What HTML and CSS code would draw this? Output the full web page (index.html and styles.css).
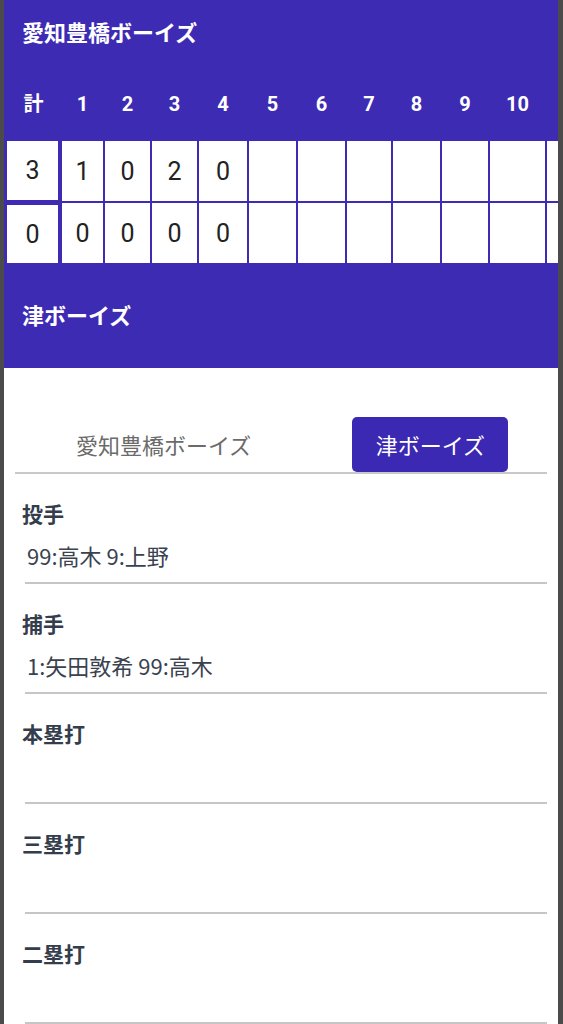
FILE: index.html
```html
<!DOCTYPE html>
<html lang="ja">
<head>
    <meta charset="UTF-8">
    <meta name="viewport" content="width=device-width, initial-scale=1.0">
    <title>スコア入力</title>
    <link rel="stylesheet" href="styles.css">
</head>
<body>
    <div class="app">
        <header class="board">
            <div class="team-name">愛知豊橋ボーイズ</div>
            <div class="score-grid">
                <div class="inning">計</div>
                <div class="inning">1</div>
                <div class="inning">2</div>
                <div class="inning">3</div>
                <div class="inning">4</div>
                <div class="inning">5</div>
                <div class="inning">6</div>
                <div class="inning">7</div>
                <div class="inning">8</div>
                <div class="inning">9</div>
                <div class="inning">10</div>
                <div class="inning"></div>

                <div class="cell total total-top">3</div>
                <div class="cell">1</div>
                <div class="cell">0</div>
                <div class="cell">2</div>
                <div class="cell">0</div>
                <div class="cell"></div>
                <div class="cell"></div>
                <div class="cell"></div>
                <div class="cell"></div>
                <div class="cell"></div>
                <div class="cell"></div>
                <div class="cell"></div>

                <div class="cell total total-bottom">0</div>
                <div class="cell">0</div>
                <div class="cell">0</div>
                <div class="cell">0</div>
                <div class="cell">0</div>
                <div class="cell"></div>
                <div class="cell"></div>
                <div class="cell"></div>
                <div class="cell"></div>
                <div class="cell"></div>
                <div class="cell"></div>
                <div class="cell"></div>
            </div>
            <div class="team-name team-away">津ボーイズ</div>
        </header>

        <div class="tabs">
            <button class="tab">愛知豊橋ボーイズ</button>
            <button class="tab tab-active">津ボーイズ</button>
        </div>

        <div class="fields">
            <div class="field">
                <div class="field-label">投手</div>
                <div class="field-value">99:高木 9:上野</div>
            </div>
            <div class="field">
                <div class="field-label">捕手</div>
                <div class="field-value">1:矢田敦希 99:高木</div>
            </div>
            <div class="field">
                <div class="field-label">本塁打</div>
                <div class="field-value"></div>
            </div>
            <div class="field">
                <div class="field-label">三塁打</div>
                <div class="field-value"></div>
            </div>
            <div class="field">
                <div class="field-label">二塁打</div>
                <div class="field-value"></div>
            </div>
        </div>
    </div>
</body>
</html>
```

FILE: styles.css
```css
body {
    margin: 0;
    padding: 0 5px 0 4px;
    background-color: #4b4b4b; /* gris del marco */
    font-family: "Noto Sans CJK JP", "Noto Sans", sans-serif;
}
.app {
    background-color: #ffffff;
    min-height: 1024px;
    overflow: hidden;
}

/* marcador */
.board {
    background-color: #3d2bb4;
    overflow: hidden;
}
.team-name {
    padding: 17px 18px 3px;
    color: #ffffff;
    font-size: 22px;
    font-weight: 700;
    line-height: 28px;
}
.team-away {
    padding: 37px 18px 40px;
}
.score-grid {
    display: grid;
    grid-template-columns: 53px 41px 45px 45px 48px 47px 47px 44px 47px 46px 55px 55px;
    grid-template-rows: 91px 60px 60px;
    gap: 2px;
    padding-left: 3px;
    width: max-content;
}
.inning {
    padding-top: 46px;
    color: #ffffff;
    font-family: Roboto, "Noto Sans CJK JP", sans-serif;
    font-size: 20px;
    font-weight: 700;
    line-height: 20px;
    text-align: center;
    box-sizing: border-box;
}
.cell {
    display: flex;
    align-items: center;
    justify-content: center;
    background-color: #ffffff;
    color: #222222;
    font-family: Roboto, sans-serif;
    font-size: 25px;
}
.total {
    margin-right: 2px;
}
.total-top {
    margin-bottom: 1px;
}
.total-bottom {
    margin-top: 2px;
}

/* pestañas */
.tabs {
    display: flex;
    align-items: center;
    margin: 49px 11px 0;
    border-bottom: 2px solid #c8c8c8;
}
.tab {
    margin-left: 61px;
    padding: 0;
    border: none;
    background: none;
    color: #6b6b6b;
    font-family: "Noto Sans CJK JP", sans-serif;
    font-size: 22px;
    line-height: 53px;
}
.tab-active {
    width: 156px;
    height: 55px;
    margin-left: 101px;
    border-radius: 5px;
    background-color: #3b29b3;
    color: #ffffff;
}

/* campos */
.field {
    padding: 25px 11px 0 18px;
}
.field-label {
    color: #343d4b;
    font-size: 21px;
    font-weight: 700;
    line-height: 28px;
}
.field-value {
    min-height: 28px;
    margin: 14px 0 0 3px;
    padding: 0 2px 13px;
    border-bottom: 2px solid #c6c6c6;
    color: #3a4250;
    font-size: 22px;
    line-height: 28px;
}
```
